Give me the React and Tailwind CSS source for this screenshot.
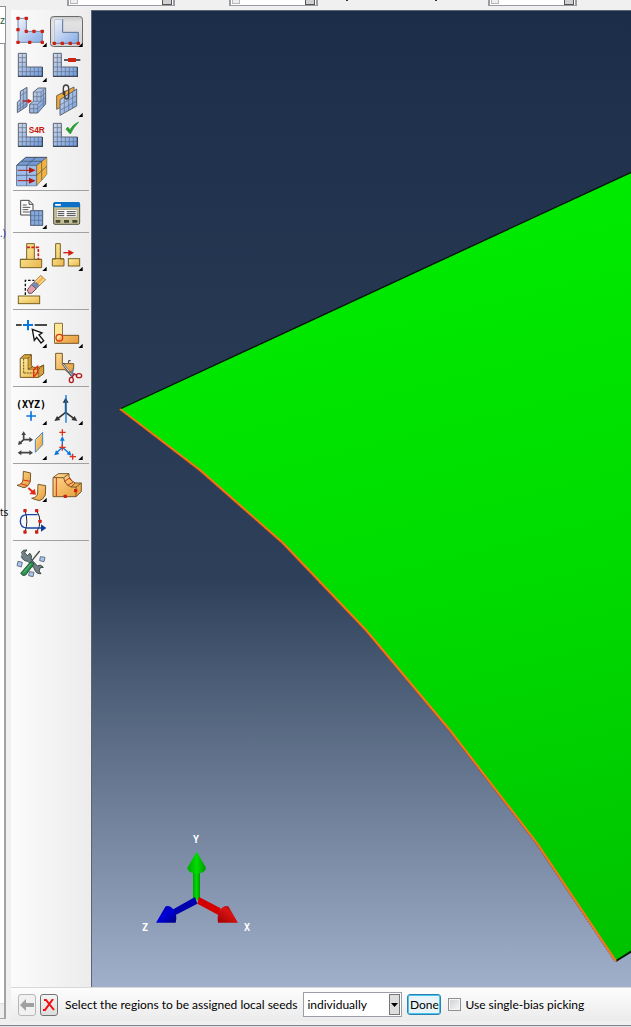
import React from "react";

// Tool drawings use a grid of three units to the pixel; ox/oy is the drawing's origin on that grid.
function Tool({ label, ox, oy, menu, active, children }) {
  return (
    <button
      type="button"
      title={label}
      aria-label={label}
      aria-pressed={active ? true : undefined}
      className="block h-[35px] w-9"
    >
      <svg viewBox="0 0 108 105" className="block h-[35px] w-9" fill="none" aria-hidden="true">
        {active && (
          <rect x="4.500" y="7.500" width="96" height="90" rx="9" fill="url(#pressed)" stroke="#6b6b6b" strokeWidth="3" />
        )}
        <g transform={`translate(${-ox} ${-oy})`}>{children}</g>
        {menu && <path d="M101 86V99H88Z" fill="#000" />}
      </svg>
    </button>
  );
}

function Group({ children, first }) {
  return (
    <div
      role="group"
      className={
        first
          ? "grid grid-cols-[36px_36px] pb-px"
          : "grid grid-cols-[36px_36px] border-t border-[#a0a0a0] pt-[5px] pb-px"
      }
    >
      {children}
    </div>
  );
}

function Dots({ points, r = 5 }) {
  return points.map(([x, y]) => (
    <rect key={`${x}-${y}`} x={x - r} y={y - r} width={r * 2} height={r * 2} rx="2" fill="#cf2013" />
  ));
}

function MeshL({ x, y }) {
  return (
    <g transform={`translate(${x} ${y})`}>
      <path d="M1 1H25V42H73V70H1Z" fill="url(#mesh)" stroke="#5b6474" strokeWidth="3" />
      <path d="M13 1V70M25 42V70M37 42V70M49 42V70M61 42V70M1 14H25M1 28H25M1 42H25M1 56H73" stroke="#5f6d84" strokeWidth="2" />
      <path d="M0 70H75M73 42V71" stroke="#333c4a" strokeWidth="3" />
    </g>
  );
}

function Defs() {
  return (
    <svg className="absolute h-0 w-0" aria-hidden="true">
      <defs>
        <linearGradient id="blue" x1="0" y1="0" x2="1" y2="1">
          <stop offset="0.100" stopColor="#e6ebf7" />
          <stop offset="1" stopColor="#86ace6" />
        </linearGradient>
        <linearGradient id="mesh" x1="0" y1="0" x2="1" y2="1">
          <stop offset="0" stopColor="#d5d9e6" />
          <stop offset="1" stopColor="#6c9ce2" />
        </linearGradient>
        <linearGradient id="gold" x1="0" y1="0" x2="1" y2="1">
          <stop offset="0" stopColor="#fff0a5" />
          <stop offset="1" stopColor="#e9b64c" />
        </linearGradient>
        <linearGradient id="orange" x1="0" y1="0" x2="1" y2="1">
          <stop offset="0" stopColor="#ffdc93" />
          <stop offset="1" stopColor="#e69a36" />
        </linearGradient>
        <linearGradient id="pressed" x1="0" y1="0" x2="0" y2="1">
          <stop offset="0" stopColor="#c9c9c9" />
          <stop offset="0.2" stopColor="#e2e2e2" />
          <stop offset="1" stopColor="#d2d2d2" />
        </linearGradient>
      </defs>
    </svg>
  );
}

function Toolbox() {
  return (
    <nav aria-label="Mesh tools" className="w-20 shrink-0 bg-linear-to-r from-[#fbfbfb] to-[#ececec] pt-1 pr-[2px] pl-[2px]">
      <Group first>
        <Tool label="Seed part" ox={39} oy={42} menu>
          <path d="M54 55H79V94H127V127H54Z" fill="url(#blue)" stroke="#7089ab" strokeWidth="3" />
          <Dots points={[[54, 55], [79, 55], [54, 89], [79, 94], [102, 94], [127, 94], [54, 127], [89, 127], [127, 127]]} />
        </Tool>
        <Tool label="Seed edges" ox={147} oy={42} menu active>
          <path d="M163 58H188V97H235V130H163Z" fill="url(#blue)" stroke="#5b7397" strokeWidth="3" />
          <path d="M162 127V57H187" stroke="#fff" strokeWidth="3" />
          <Dots points={[[163, 130], [187, 130], [211, 130], [235, 130]]} />
        </Tool>
        <Tool label="Mesh part" ox={39} oy={147} menu>
          <MeshL x={54} y={159} />
        </Tool>
        <Tool label="Delete mesh seeds" ox={147} oy={147}>
          <MeshL x={159} y={159} />
          <path d="M192 180H241" stroke="#111" strokeWidth="4" />
          <rect x="204" y="174" width="24" height="12" rx="2" fill="#cf2013" />
        </Tool>
        <Tool label="Create bottom-up mesh" ox={39} oy={-18}>
          <path d="M52 36L61 29V4L81 -8V49L52 68Z" fill="url(#mesh)" stroke="#5b6474" strokeWidth="3" />
          <path d="M61 29V62M70 0V56M52 50L81 30M61 17L81 5M52 60L81 41" stroke="#5f6d84" strokeWidth="2" />
          <path d="M68 33H88" stroke="#b91c10" strokeWidth="4" />
          <path d="M83 26L97 33L83 41Z" fill="#cf2013" />
          <path d="M100 6L115 -6H137V42L113 69H89V43L100 34Z" fill="url(#mesh)" stroke="#5b6474" strokeWidth="3" />
          <path d="M100 6H123L137 -6M123 6V34L113 43H89M113 43V69M100 34H124L137 22M101 43V69M89 56H113L137 32M111 6V34M100 20H123L137 8M130 0V49" stroke="#5f6d84" strokeWidth="2" />
        </Tool>
        <Tool label="Associate mesh with geometry" ox={147} oy={-18} menu>
          <path d="M170 17L222 -9V30L170 58Z" fill="#efa83b" stroke="#6b6350" strokeWidth="3" />
          <path d="M180 29L230 -3V48L180 76Z" fill="url(#mesh)" stroke="#5b6474" strokeWidth="3" />
          <path d="M193 22V68M206 14V61M218 6V54M180 45L230 16M180 61L230 33" stroke="#5f6d84" strokeWidth="2" />
          <path d="M190 15V-5Q190 -15 198 -15Q206 -15 206 -5V19Q206 27 200 27Q194 27 194 18V2" stroke="#3f3f3f" strokeWidth="4" />
        </Tool>
        <Tool label="Assign element type" ox={39} oy={87}>
          <MeshL x={54} y={99} />
          <text x="86" y="128" fill="#c7190d" fontSize="25" fontWeight="700" fontFamily="Liberation Sans, sans-serif">
            S4R
          </text>
        </Tool>
        <Tool label="Verify mesh" ox={147} oy={87}>
          <MeshL x={159} y={99} />
          <path d="M198 118L203 111L210 119Q219 103 236 96Q221 111 211 132Z" fill="#279a31" stroke="#279a31" strokeWidth="2" />
        </Tool>
        <Tool label="Assign stack direction" ox={39} oy={192} menu>
          <path d="M50 226L77 202H140V253L110 287H50Z" fill="#729ad4" stroke="#464d58" strokeWidth="3" />
          <path d="M50 226H110V287H50Z" fill="#9dbdec" />
          <path d="M110 227L140 203V253L110 287Z" fill="#f2b43e" />
          <path d="M50 226H110L140 202M110 226V287M50 256H110L140 229M80 287V226L108 202M125 214V270M64 214H126" stroke="#464d58" strokeWidth="2" />
          <path d="M53 241H90M53 272H90" stroke="#b3190f" strokeWidth="3" />
          <path d="M87 232L107 241L87 250ZM87 263L107 272L87 281Z" fill="#b3190f" />
        </Tool>
      </Group>

      <Group>
        <Tool label="Mesh from report" ox={39} oy={33} menu>
          <path d="M62 46H87L99 58V90H62Z" fill="#fff" stroke="#444" strokeWidth="3" />
          <path d="M87 46V58H99" stroke="#444" strokeWidth="3" />
          <path d="M68 60H80M68 67H91M68 74H85M68 81H91" stroke="#555" strokeWidth="3" />
          <rect x="92" y="77" width="36" height="44" fill="#86aadd" stroke="#4b5870" strokeWidth="3" />
          <path d="M104 77V121M116 77V121M92 92H128M92 106H128" stroke="#53688b" strokeWidth="2" />
        </Tool>
        <Tool label="Mesh manager" ox={147} oy={33}>
          <rect x="161" y="53" width="78" height="65" rx="4" fill="#c4bf97" stroke="#55543d" strokeWidth="3" />
          <path d="M160 67V56Q160 51 165 51H235Q240 51 240 56V67Z" fill="#0c70c7" />
          <rect x="165" y="57" width="18" height="5" rx="2" fill="#fff" />
          <rect x="169" y="74" width="62" height="24" fill="#fff" stroke="#99967d" strokeWidth="2" />
          <path d="M173 80H193M173 86H193M173 92H193M200 80H227M200 86H227M200 92H227" stroke="#444" strokeWidth="3" />
          <path d="M167 105H181V113H167ZM192 105H207V113H192ZM217 105H232V113H217Z" fill="#4a4b35" />
        </Tool>
      </Group>

      <Group>
        <Tool label="Create feature" ox={39} oy={159} menu>
          <path d="M80 176H103V223H125V248H61V223H80Z" fill="url(#gold)" stroke="#7a6223" strokeWidth="3" />
          <path d="M61 223H125" stroke="#7a6223" strokeWidth="3" />
          <path d="M81 187H115V223" stroke="#cf2013" strokeWidth="5" strokeDasharray="9 4" />
        </Tool>
        <Tool label="Edit feature" ox={147} oy={159} menu>
          <path d="M167 176H181V222H192V243H157V222H167Z" fill="url(#gold)" stroke="#7a6223" strokeWidth="3" />
          <path d="M157 221H192" stroke="#7a6223" strokeWidth="3" />
          <rect x="205" y="221" width="34" height="22" fill="url(#gold)" stroke="#7a6223" strokeWidth="3" />
          <path d="M190 203H210" stroke="#cf2013" strokeWidth="4" />
          <path d="M205 194L222 203L205 213Z" fill="#cf2013" />
        </Tool>
        <Tool label="Delete feature" ox={39} oy={264}>
          <rect x="55" y="333" width="64" height="23" fill="url(#gold)" stroke="#7a6223" strokeWidth="3" />
          <path d="M76 330V286H103" stroke="#111" strokeWidth="4" strokeDasharray="8 5" />
          <path d="M82 315L94 299L109 311L95 325H86Z" fill="#e7a0aa" stroke="#665057" strokeWidth="3" />
          <path d="M94 299L104 289L119 301L109 311Z" fill="#798aae" stroke="#5c6170" strokeWidth="2" />
          <path d="M104 289L122 271L137 284L119 301Z" fill="#f3b65b" stroke="#95723d" strokeWidth="2" />
          <path d="M106 292L123 276M116 299L133 282" stroke="#fff0a7" strokeWidth="3" />
        </Tool>
      </Group>

      <Group>
        <Tool label="Partition edge" ox={39} oy={30} menu>
          <path d="M48 60H65M104 60H141" stroke="#111" strokeWidth="5" />
          <path d="M69 60H99M84 45V76" stroke="#0876dc" strokeWidth="6" />
          <path d="M97 73L126 84L117 90L131 107L123 114L110 97L103 106Z" fill="#fff" stroke="#111" strokeWidth="4" />
        </Tool>
        <Tool label="Partition face" ox={147} oy={30} menu>
          <path d="M164 55H187V91H236V115H164Z" fill="url(#orange)" stroke="#76592a" strokeWidth="3" />
          <path d="M165 56H186V90L165 113Z" fill="#ffe894" />
          <circle cx="178" cy="98" r="10" stroke="#e13817" strokeWidth="4" />
        </Tool>
        <Tool label="Partition cell" ox={39} oy={135} menu>
          <path d="M61 160L73 149H94V181L101 187H116L131 180V206L116 217H61Z" fill="#d6a13e" stroke="#73551f" strokeWidth="3" />
          <path d="M61 160H84V193H116V217H61Z" fill="url(#gold)" stroke="#73551f" strokeWidth="2" />
          <path d="M84 160L94 149M84 193L98 185M116 193L131 180M71 161V204M71 204H112" stroke="#65501d" strokeWidth="3" strokeDasharray="6 3" />
          <path d="M101 195L113 184V204L101 215Z" stroke="#e42d17" strokeWidth="4" />
        </Tool>
        <Tool label="Remove partition" ox={147} oy={135}>
          <path d="M167 145H187V176H221V193L207 205L195 194H167Z" fill="url(#orange)" stroke="#76592a" strokeWidth="3" />
          <path d="M206 174V167H212" stroke="#333" strokeWidth="3" />
          <path d="M188 175L216 213" stroke="#505967" strokeWidth="7" />
          <path d="M190 178L216 210" stroke="#e6ebf0" strokeWidth="3" />
          <path d="M220 190L215 218M207 200L232 211" stroke="#6f7a87" strokeWidth="4" />
          <ellipse cx="214" cy="225" rx="6" ry="8" stroke="#b11b20" strokeWidth="4" />
          <ellipse cx="237" cy="212" rx="8" ry="6" stroke="#b11b20" strokeWidth="4" />
          <path d="M215 218L223 207L230 210" stroke="#b11b20" strokeWidth="4" />
        </Tool>
      </Group>

      <Group>
        <Tool label="Create datum point" ox={39} oy={21} menu>
          <text x="48" y="69" fill="#000" fontSize="30" fontWeight="700" fontFamily="DejaVu Sans Mono, monospace">
            (XYZ)
          </text>
          <path d="M79 93H108M93 79V107" stroke="#0876dc" strokeWidth="5" />
        </Tool>
        <Tool label="Create datum axis" ox={147} oy={21} menu>
          <path d="M197 84V41M197 82L173 101M197 82L222 101" stroke="#333" strokeWidth="5" />
          <path d="M188 53L197 38L206 53ZM163 108L171 93L181 105ZM232 108L224 93L214 105Z" fill="#333" />
          <path d="M198 30V113" stroke="#0876dc" strokeWidth="4" />
        </Tool>
        <Tool label="Create datum plane" ox={39} oy={126} menu>
          <path d="M71 164V147M71 164H92M71 164L59 175M61 203H91" stroke="#444" strokeWidth="5" />
          <path d="M64 150L71 139L78 150ZM88 156L99 164L88 172ZM54 180L57 167L67 176ZM64 196L53 203L64 211ZM88 196L99 203L88 211Z" fill="#444" />
          <path d="M106 164L128 142V179L106 202Z" fill="url(#orange)" stroke="#4d86ba" strokeWidth="3" />
        </Tool>
        <Tool label="Create datum coordinate system" ox={147} oy={126} menu>
          <path d="M187 187V162M187 187L170 203M187 187L209 206" stroke="#0876dc" strokeWidth="4" />
          <path d="M180 167L187 153L194 167ZM163 211L168 196L178 207ZM215 212L209 197L200 208Z" fill="#0876dc" />
          <path d="M178 142H197M187 133V152M178 187H197M187 178V197M209 215H228M218 206V224" stroke="#dd311a" strokeWidth="4" />
        </Tool>
      </Group>

      <Group>
        <Tool label="Edit mesh" ox={39} oy={27} menu>
          <path d="M70 34L92 39L91 64Q85 81 72 83L51 76Q67 73 69 60Z" fill="url(#orange)" stroke="#76592a" strokeWidth="3" />
          <path d="M69 60L91 64M62 71L82 77" stroke="#df2d19" strokeWidth="3" />
          <path d="M85 84L102 99" stroke="#df2d19" strokeWidth="6" />
          <path d="M108 104L88 102L104 86Z" fill="#df2d19" />
          <path d="M114 73L137 77L136 105Q129 120 118 122L95 115Q113 112 113 99Z" fill="url(#orange)" stroke="#76592a" strokeWidth="3" />
        </Tool>
        <Tool label="Create virtual topology" ox={147} oy={27}>
          <path d="M159 53L175 41H207V50Q213 64 226 69H244V95L228 110H159Z" fill="url(#orange)" stroke="#76592a" strokeWidth="3" />
          <path d="M159 53H191Q195 74 213 81H228V110M191 53L207 41M213 81L226 69M228 81L244 69" stroke="#76592a" strokeWidth="3" />
          <path d="M169 52V108M193 65L207 55L216 62M202 76L219 67" stroke="#df2d19" strokeWidth="3" />
          <Dots points={[[227, 92], [196, 109]]} />
        </Tool>
        <Tool label="Combine edges" ox={39} oy={132}>
          <path d="M75 152Q86 184 75 216M110 152Q130 184 110 216" stroke="#20242b" strokeWidth="3" />
          <path d="M113 164H82Q61 164 61 184Q61 204 82 204H126" stroke="#1744a8" strokeWidth="4" />
          <path d="M123 193L139 204L123 215Z" fill="#123a99" />
          <Dots points={[[75, 152], [110, 152], [120, 184], [75, 216], [110, 216]]} />
        </Tool>
      </Group>

      <Group>
        <Tool label="Customize tools" ox={39} oy={258}>
          <g fill="#adc6ed" stroke="#65718a" strokeWidth="3">
            <path d="M54 304L67 307L64 321L51 317ZM121 290L135 292L132 305L119 302ZM88 335L102 337L99 350L86 347Z" />
          </g>
          <path d="M119 273L91 308" stroke="#404848" strokeWidth="4" />
          <path d="M64 278Q68 268 81 270L74 278L82 287L90 280Q98 289 93 297L112 318Q121 311 130 322L121 323L117 333L123 341Q108 343 103 326L84 304Q68 303 64 289" fill="#718186" stroke="#3b474c" strokeWidth="3" />
          <path d="M93 304L102 312L77 345Q68 350 62 340Z" fill="#29924e" stroke="#285136" strokeWidth="3" />
          <path d="M92 312L71 338" stroke="#67b980" strokeWidth="3" />
        </Tool>
      </Group>
    </nav>
  );
}

function Triad() {
  return (
    <g>
      <defs>
        <linearGradient id="axisY">
          <stop offset="0" stopColor="#00a800" />
          <stop offset="0.500" stopColor="#00dc00" />
          <stop offset="1" stopColor="#009800" />
        </linearGradient>
        <linearGradient id="axisX" x1="0" y1="1" x2="1" y2="0">
          <stop offset="0" stopColor="#a00000" />
          <stop offset="0.600" stopColor="#d81414" />
          <stop offset="1" stopColor="#900000" />
        </linearGradient>
        <linearGradient id="axisZ" x1="0" y1="0" x2="1" y2="1">
          <stop offset="0" stopColor="#0000a0" />
          <stop offset="0.500" stopColor="#0000d8" />
          <stop offset="1" stopColor="#000080" />
        </linearGradient>
      </defs>
      <g transform="translate(38 814) scale(0.33333)">
        <path d="M189 140H210V221L200 225L189 221Z" fill="url(#axisY)" />
        <path d="M200 80L228 128Q228 143 200 146Q172 143 172 128Z" fill="url(#axisY)" />
        <path d="M195 216L202 236L137 270L127 254Z" fill="#0000ae" />
        <path d="M78 293L107 244Q121 240 132 256Q143 273 137 293Z" fill="url(#axisZ)" />
        <path d="M207 216L272 250L265 270L202 236Z" fill="#d40000" />
        <path d="M324 293L295 244Q281 240 269 256Q260 273 264 293Z" fill="url(#axisX)" />
      </g>
      <g fill="#fff" fontSize="10" fontWeight="700" fontFamily="DejaVu Sans Mono, monospace">
        <text x="101" y="832">Y</text>
        <text x="50" y="920">Z</text>
        <text x="152" y="920">X</text>
      </g>
    </g>
  );
}

function Viewport() {
  return (
    <main className="relative min-w-0 flex-1 overflow-hidden border-t border-l border-[#5d6570] bg-[linear-gradient(to_bottom,#1b2d48_0%,#2e4059_58%,#a1b0ca_100%)]">
      <svg
        viewBox="0 0 539 976"
        preserveAspectRatio="xMinYMin slice"
        className="absolute inset-0 h-full w-full"
        role="img"
        aria-label="Shell part with a selected curved edge"
      >
        <defs>
          <linearGradient id="part" gradientUnits="userSpaceOnUse" x1="300" y1="230" x2="480" y2="960">
            <stop offset="0" stopColor="#00ea00" />
            <stop offset="0.500" stopColor="#00da00" />
            <stop offset="1" stopColor="#00c200" />
          </linearGradient>
        </defs>
        <path d="M28 398L540 161V941L524 950L445 832L357 718L274 619L191 532L108 459Z" fill="url(#part)" />
        <path d="M28 398L540 161" stroke="#001400" strokeWidth="1.300" fill="none" />
        <path d="M524 950L540 940" stroke="#001400" strokeWidth="2" fill="none" />
        <path d="M28 398L108 459L191 532L274 619L357 718L445 832L524 950" stroke="#fb760c" strokeWidth="2" fill="none" />
        <path
          d="M27 398L107 460L190 533L273 620L356 719L444 833L523 951"
          stroke="#a8482f"
          strokeWidth="1"
          strokeDasharray="1 1"
          fill="none"
        />
        <Triad />
      </svg>
    </main>
  );
}

function TopCombo({ className }) {
  return (
    <button
      type="button"
      aria-label="Display option"
      className={`flex h-[6px] shrink-0 justify-between border-x-2 border-b border-[#9a9ba6] bg-white px-px ${className}`}
    >
      <span className="h-1 w-2 border-x border-b border-[#b8b8b8] bg-[#eee]" />
      <span className="h-[5px] w-[10px] border-x border-b border-[#555] bg-[#d0d0d0]" />
    </button>
  );
}

function TopBar() {
  return (
    <header className="flex h-[10px] shrink-0 items-start overflow-hidden bg-[#f0f0f0] pl-[67px]">
      <TopCombo className="w-[108px]" />
      <TopCombo className="ml-[54px] w-[89px]" />
      <span className="ml-7 h-px w-[2px] bg-[#333]" />
      <span className="ml-[87px] h-px w-[2px] bg-[#333]" />
      <TopCombo className="ml-[51px] w-[89px]" />
    </header>
  );
}

function ModelTreeEdge() {
  return (
    <aside className="z-10 -mt-1 flex w-[6px] shrink-0 flex-col text-[10px] leading-4">
      <div className="h-[38px] shrink-0 border-y border-r border-[#8b919c] bg-white pt-[6px]">
        <span className="block font-['Liberation_Sans'] text-[#24603b]">z</span>
      </div>
      <div className="flex flex-1 flex-col border-r-2 border-[#a3a3a3] bg-white pt-[181px] font-['Open_Sans',sans-serif] whitespace-nowrap">
        <span className="w-2 text-[#1c2cc0]">.)</span>
        <span className="mt-[263px] w-2 text-black">ts</span>
      </div>
    </aside>
  );
}

function PromptArea() {
  return (
    <div className="flex shrink-0 bg-[#f0f0f0]">
      <div className="mb-[6px] w-[6px] shrink-0 border-r-2 border-b border-[#a3a3a3] bg-white pt-4">
        <div className="h-full border-t border-[#ddd] bg-[#eee]" />
      </div>
      <form
        onSubmit={(e) => e.preventDefault()}
        className="mb-1 ml-[5px] flex h-[34px] min-w-0 flex-1 items-center border-t border-[#d8d8d8] bg-linear-to-b from-[#fdfdfd] to-[#ebebeb] pl-[7px] font-[Lato,sans-serif] text-xs whitespace-nowrap text-black"
      >
        <button type="button" aria-label="Previous step" disabled className="flex h-[22px] w-[18px] shrink-0 items-center justify-center rounded-[3px] border border-[#b4b8ba] bg-[#f1f1f1]">
          <svg viewBox="0 0 16 14" className="h-[14px] w-4 shrink-0" aria-hidden="true">
            <path d="M1 7L7 1V5H15V9H7V13Z" fill="#a0a0a0" />
          </svg>
        </button>
        <button type="button" aria-label="Cancel procedure" className="ml-1 flex h-[22px] w-[18px] shrink-0 items-center justify-center rounded-[3px] border border-[#737373] bg-linear-to-b from-[#f4f4f4] to-[#dcdcdc]">
          <svg viewBox="0 0 12 12" className="h-3 w-3 shrink-0" aria-hidden="true">
            <path d="M1 1H3L11 11M10 0L2 11H0" fill="none" stroke="#f20d12" strokeWidth="2" />
          </svg>
        </button>
        <label htmlFor="pick-mode" className="ml-[7px] min-w-[232px]">
          Select the regions to be assigned local seeds
        </label>
        <span className="relative ml-[6px] flex h-[25px] w-[99px] shrink-0">
          <select
            id="pick-mode"
            defaultValue="individually"
            className="h-full w-full appearance-none border border-[#9c9ea5] bg-white pl-[3px]"
          >
            <option>individually</option>
            <option>by edge angle</option>
          </select>
          <span className="pointer-events-none absolute top-[2px] right-[2px] flex h-[21px] w-[11px] items-center justify-center border border-[#777] bg-[#dedede]">
            <svg viewBox="0 0 7 4" className="h-1 w-[7px] shrink-0" aria-hidden="true">
              <path d="M0 0H7L3.500 4Z" fill="#000" />
            </svg>
          </span>
        </span>
        <button type="submit" className="ml-[5px] h-[21px] w-[34px] shrink-0 rounded-[3px] border border-[#2f7fb1] bg-[#eaf4f8] leading-4 shadow-[inset_0_0_0_1px_#42c7ee]">
          Done
        </button>
        <input
          id="single-bias"
          type="checkbox"
          className="ml-[7px] h-[13px] w-[13px] shrink-0 appearance-none border border-[#8e8f8f] bg-linear-to-br from-[#cdd1d5] to-[#f6f6f6] shadow-[inset_0_0_0_1px_#f4f4f4]"
        />
        <label htmlFor="single-bias" className="ml-1">
          Use single-bias picking
        </label>
      </form>
    </div>
  );
}

export default function App() {
  return (
    <div className="flex min-h-screen flex-col bg-[#f0f0f0]">
      <Defs />
      <TopBar />
      <div className="flex min-h-0 flex-1">
        <ModelTreeEdge />
        <div className="w-[5px] shrink-0" />
        <Toolbox />
        <Viewport />
      </div>
      <PromptArea />
      <footer className="h-[2px] shrink-0 border-t border-[#80848e] bg-[#dfe1e6]" />
    </div>
  );
}
